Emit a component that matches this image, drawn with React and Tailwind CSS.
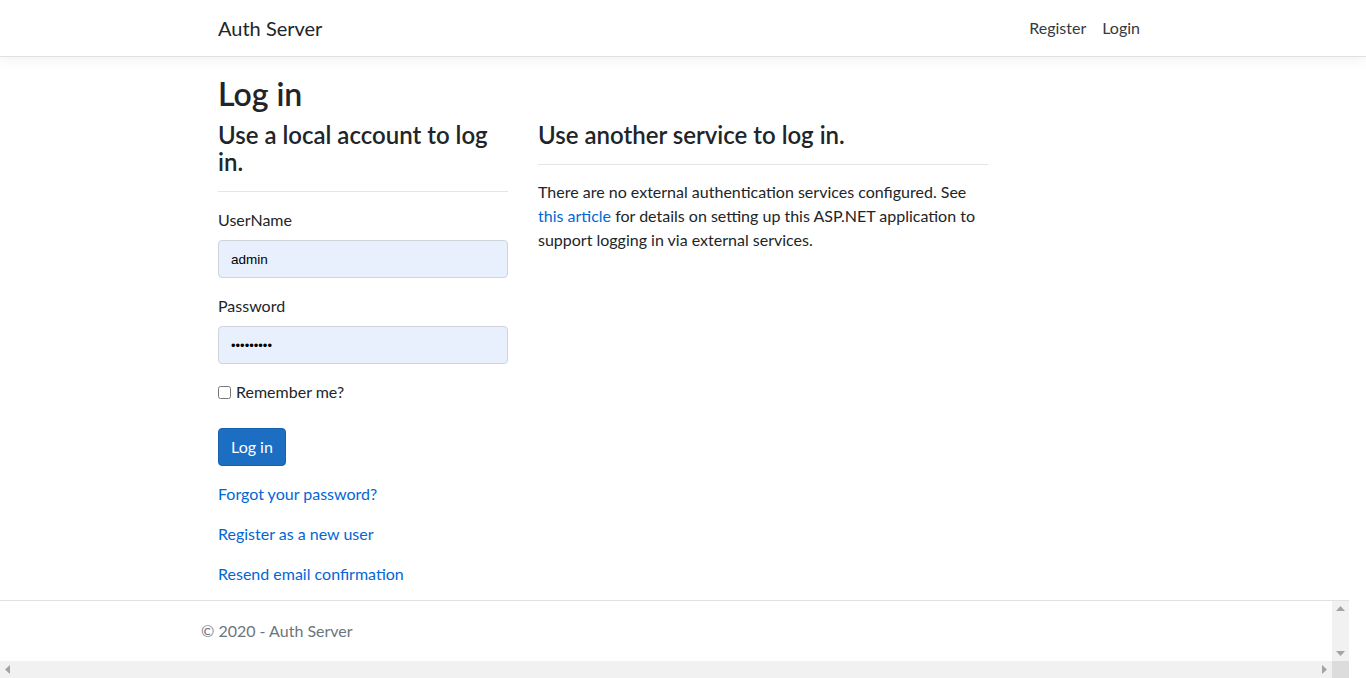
import React from "react";

export default function App() {
  return (
    <div className="h-[678px] flex flex-col bg-white text-[#212529] font-['Lato',sans-serif] text-[16px] leading-[24px] overflow-hidden">
      {/* navbar */}
      <nav className="h-[57px] shrink-0 border-b border-[#dee2e6] bg-white shadow-[0_4px_12px_rgba(0,0,0,0.05)] relative z-10">
        <div className="w-[930px] mx-auto h-full flex items-center justify-between">
          <a href="#" className="text-[20px] leading-[30px] text-[#212529]">
            Auth Server
          </a>
          <ul className="flex">
            <li>
              <a href="#" className="block px-2 py-2 text-[#343a40]">
                Register
              </a>
            </li>
            <li>
              <a href="#" className="block px-2 py-2 text-[#343a40]">
                Login
              </a>
            </li>
          </ul>
        </div>
      </nav>

      {/* main */}
      <main className="flex-1 min-h-0 overflow-hidden">
        <div className="w-[930px] mx-auto pt-[18px]">
          <h1 className="text-[32px] leading-[38px] font-semibold mb-2">Log in</h1>
          <div className="flex gap-[30px]">
            <section className="w-[290px]">
              <h4 className="text-[24px] leading-[27px] font-semibold">
                Use a local account to log in.
              </h4>
              <hr className="mt-4 mb-4 border-t border-[rgba(0,0,0,0.1)]" />
              <form action="#">
                <div className="mb-4">
                  <label htmlFor="username" className="block mb-2">
                    UserName
                  </label>
                  <input
                    id="username"
                    type="text"
                    defaultValue="admin"
                    className="w-full h-[38px] px-3 rounded border border-[#ced4da] bg-[#e8f0fe] text-[13.5px] text-black font-['Liberation_Sans',Arial,sans-serif] focus:outline-none"
                  />
                </div>
                <div className="mb-4">
                  <label htmlFor="password" className="block mb-2">
                    Password
                  </label>
                  <input
                    id="password"
                    type="password"
                    defaultValue="123456789"
                    className="w-full h-[38px] px-3 rounded border border-[#ced4da] bg-[#e8f0fe] text-[13px] text-black font-['Liberation_Sans',Arial,sans-serif] focus:outline-none"
                  />
                </div>
                <div className="mb-6">
                  <label htmlFor="remember" className="flex items-center">
                    <input id="remember" type="checkbox" className="w-[13px] h-[13px] m-0 mr-[5px]" />
                    Remember me?
                  </label>
                </div>
                <div className="mb-4">
                  <button
                    type="submit"
                    className="h-[38px] px-3 rounded border border-[#1861ac] bg-[#1b6ec2] text-white"
                  >
                    Log in
                  </button>
                </div>
                <div>
                  <p className="mb-4">
                    <a href="#" className="text-[#0366d6]">
                      Forgot your password?
                    </a>
                  </p>
                  <p className="mb-4">
                    <a href="#" className="text-[#0366d6]">
                      Register as a new user
                    </a>
                  </p>
                  <p className="mb-4">
                    <a href="#" className="text-[#0366d6]">
                      Resend email confirmation
                    </a>
                  </p>
                </div>
              </form>
            </section>
            <section className="w-[450px]">
              <h4 className="text-[24px] leading-[27px] font-semibold">
                Use another service to log in.
              </h4>
              <hr className="mt-4 mb-4 border-t border-[rgba(0,0,0,0.1)]" />
              <p className="-mt-px">
                There are no external authentication services configured. See{" "}
                <a href="#" className="text-[#0366d6]">
                  this article
                </a>{" "}
                for details on setting up this ASP.NET application to support logging in via
                external services.
              </p>
            </section>
          </div>
        </div>
      </main>

      {/* footer with its own scrollbars */}
      <footer className="h-[78px] shrink-0 w-[1349px] border-t border-[#dee2e6] flex flex-col text-[#6c757d]">
        <div className="flex-1 flex">
          <div className="flex-1">
            <div className="w-[930px] mx-auto leading-[60px] whitespace-nowrap">© 2020 - Auth Server</div>
          </div>
          <div className="w-[17px] bg-[#f1f1f1] flex flex-col items-center justify-between py-[5px]">
            <svg width="9" height="5" viewBox="0 0 9 5">
              <path d="M0 5 L4.5 0 L9 5 Z" fill="#a3a3a3" />
            </svg>
            <svg width="9" height="5" viewBox="0 0 9 5">
              <path d="M0 0 L4.5 5 L9 0 Z" fill="#a3a3a3" />
            </svg>
          </div>
        </div>
        <div className="h-[17px] flex">
          <div className="flex-1 bg-[#f1f1f1] flex items-center justify-between px-[5px]">
            <svg width="5" height="9" viewBox="0 0 5 9">
              <path d="M5 0 L0 4.5 L5 9 Z" fill="#a3a3a3" />
            </svg>
            <svg width="5" height="9" viewBox="0 0 5 9">
              <path d="M0 0 L5 4.5 L0 9 Z" fill="#a3a3a3" />
            </svg>
          </div>
          <div className="w-[17px] bg-[#dcdcdc]" />
        </div>
      </footer>
    </div>
  );
}
